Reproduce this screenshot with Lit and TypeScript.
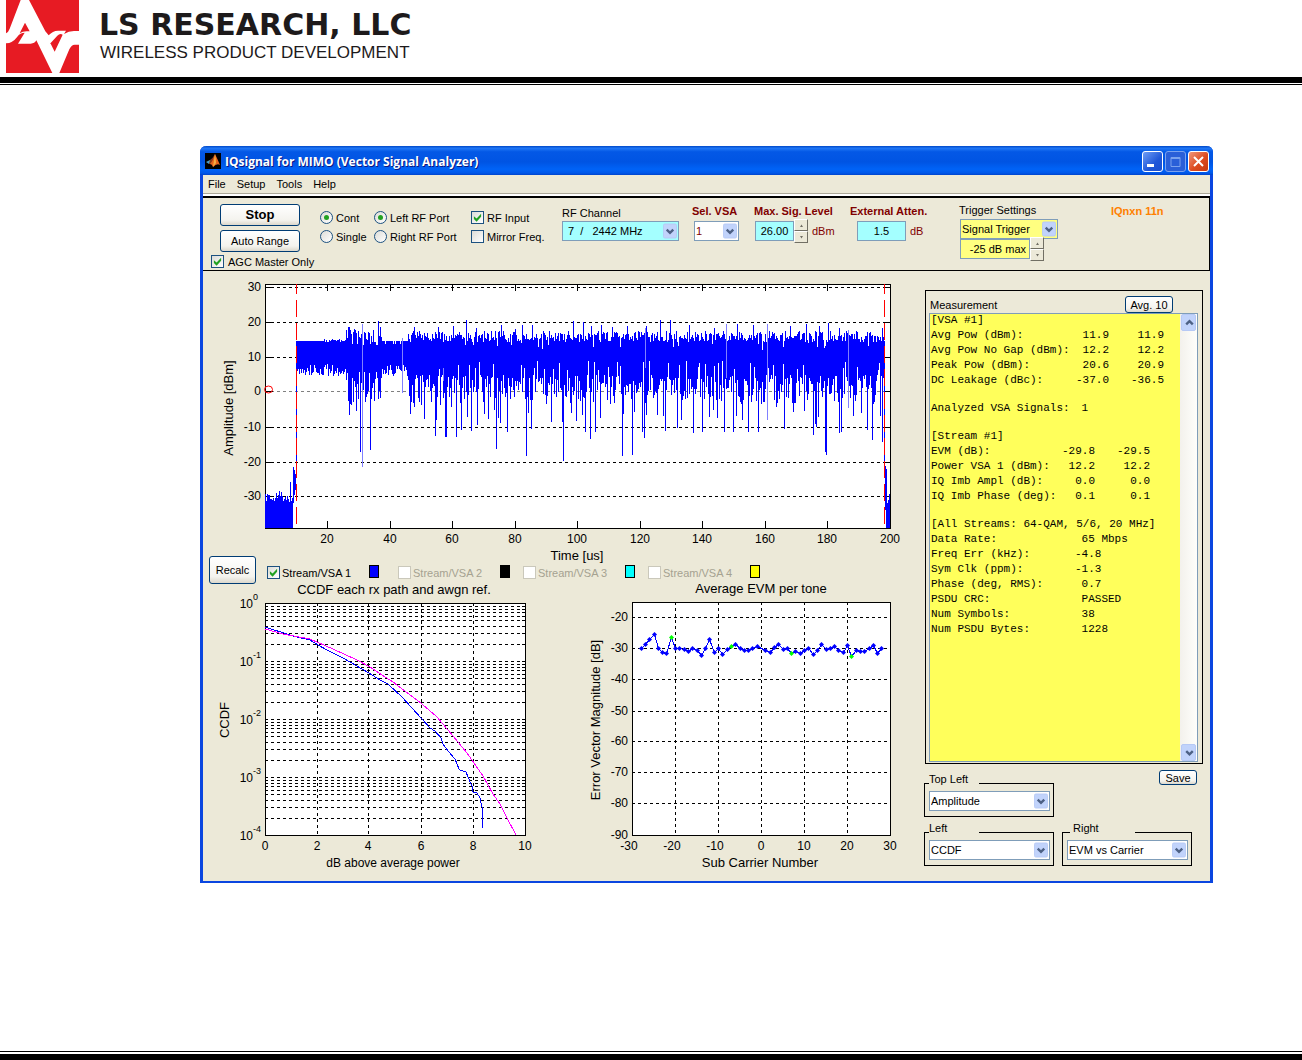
import { LitElement, html, svg, css } from "lit";
import { customElement, property } from "lit/decorators.js";

const SANS = css`"Liberation Sans", Arial, sans-serif`;

/* Styles shared by every XP-like control */
const controls = css`
  *, *::before, *::after { box-sizing: border-box; }
  button, input, select, label, legend { font-family: ${SANS}; font-size: 11px; color: #000; margin: 0; }
  .btn {
    border: 1px solid #003c74; border-radius: 3px; padding: 0 4px;
    background: linear-gradient(#ffffff, #f4f3ee 75%, #dcd8cc);
    line-height: 14px; white-space: nowrap;
  }
  .choice { display: flex; align-items: center; gap: 3px; height: 13px; white-space: nowrap; }
  .choice.off label { color: #a5a291; }
  input[type="checkbox"], input[type="radio"] {
    appearance: none; width: 13px; height: 13px; flex: none;
    border: 1px solid #1c5180; display: grid; place-items: center;
    background: linear-gradient(135deg, #dcdcd7, #ffffff);
  }
  input[type="radio"] { border-radius: 50%; }
  input[type="radio"]:checked::before {
    content: ""; width: 5px; height: 5px; border-radius: 50%; background: #21a121;
  }
  input[type="checkbox"]:checked::before {
    content: ""; width: 9px; height: 9px; background: #21a121;
    clip-path: polygon(10% 35%, 40% 62%, 90% 8%, 90% 42%, 40% 96%, 10% 68%);
  }
  input[type="checkbox"]:disabled { border-color: #cac8bb; background: #fff; }
  .combo { display: grid; height: 20px; }
  .combo > * { grid-area: 1 / 1; }
  .combo select {
    appearance: none; width: 100%; height: 20px; padding: 0 18px 0 1px;
    border: 1px solid #7f9db9; border-radius: 0; background: #fff; line-height: 18px;
  }
  .combo svg { justify-self: end; align-self: center; margin-right: 2px; pointer-events: none; }
  .cyan select, input.cyan { background: #a4ffff; }
  .yellow select, input.yellow { background: #ffff80; }
`;

const chevron = (up = false) => svg`
  <path d=${up ? "M4 10 L7.500 6.500 L11 10" : "M4 6.500 L7.500 10 L11 6.500"} fill="none" stroke="#4d6185" stroke-width="2.500"></path>`;

const comboArrow = html`
  <svg width="14" height="16" viewBox="0 0 15 16" aria-hidden="true">
    <rect x="0.500" y="0.500" width="14" height="15" rx="1.500" fill="#c1d3fb" stroke="#b6c9f5"></rect>
    ${chevron()}
  </svg>`;

/* Drop-down whose accessible name comes from its label property */
@customElement("xp-combo")
class XpCombo extends LitElement {
  @property() label = "";
  @property() value = "";
  @property() tone = "";
  static styles = [controls, css`
    :host { display: block; }
    .dark select { color: #800000; }
    .indent select { padding-left: 5px; }
  `];
  render() {
    return html`<div class="combo ${this.tone}">
      <select aria-label=${this.label}><option>${this.value}</option></select>${comboArrow}
    </div>`;
  }
}

@customElement("xp-spin")
class XpSpin extends LitElement {
  @property() label = "";
  static styles = css`
    :host { display: block; }
    .spin { display: flex; flex-direction: column; width: 14px; }
    button {
      box-sizing: border-box; width: 14px; height: 12px; padding: 0; display: grid; place-items: center;
      background: #ece9d8; border: 1px solid; border-color: #fff #716f64 #716f64 #fff; border-radius: 0;
    }
  `;
  render() {
    return html`<div class="spin">
      <button aria-label="${this.label} up"><svg width="5" height="3"><path d="M1 3 L2.500 0.500 L4 3Z" fill="#716f64"></path></svg></button>
      <button aria-label="${this.label} down"><svg width="5" height="3"><path d="M1 0 L2.500 2.500 L4 0Z" fill="#716f64"></path></svg></button>
    </div>`;
  }
}

const chartStyles = css`
  :host { display: block; }
  svg { display: block; width: 100%; height: auto; overflow: visible; font-family: ${SANS}; }
  .plot { fill: #fff; stroke: #000; }
  .crisp { shape-rendering: crispEdges; }
  .grid { stroke: #000; stroke-dasharray: 3 3; fill: none; }
  .soft { stroke: #808080; }
  .tick { stroke: #000; fill: none; }
  .num { font-size: 12px; }
  .name { font-size: 13px; }
  .sup { font-size: 9px; }
  .mid { text-anchor: middle; }
  .end { text-anchor: end; }
  .blue { stroke: #0000ff; fill: none; }
  .pale { stroke: #8080ff; fill: none; }
  .magenta { stroke: #ff00ff; fill: none; }
  .red { stroke: #ff0000; fill: none; }
  .marker { stroke-dasharray: 17 6; stroke-dashoffset: 7; }
  .dot { fill: #0000ff; }
  .pilot { fill: #00ff00; }
`;

/* Small repeatable generator so that the trace is the same on every draw */
function makeRandom(seed: number) {
  let s = seed;
  return () => {
    s = (s * 1664525 + 1013904223) % 4294967296;
    return s / 4294967296;
  };
}

const DIPS: Record<number, number> = {
  349: 415, 351: 405, 356: 411, 360: 452, 370: 450, 374: 401, 410: 414, 414: 407, 421: 405, 424: 419, 431: 402,
  435: 436, 436: 420, 440: 405, 445: 437, 446: 437, 451: 407, 456: 437, 461: 430, 467: 417, 471: 431, 477: 425,
  484: 414, 488: 419, 494: 410, 496: 449, 498: 418, 500: 423, 507: 432, 526: 456, 528: 413, 531: 429, 546: 404,
  551: 422, 562: 422, 563: 461, 571: 413, 576: 421, 582: 415, 585: 432, 590: 439, 595: 432, 600: 418, 622: 456,
  623: 414, 632: 455, 634: 412, 642: 432, 644: 438, 646: 415, 657: 415, 663: 416, 665: 431, 677: 428, 681: 420,
  693: 433, 702: 432, 709: 417, 713: 410, 717: 418, 724: 432, 733: 432, 736: 416, 742: 420, 748: 432, 758: 432,
  776: 407, 784: 429, 793: 412, 804: 411, 813: 435, 815: 424, 816: 427, 818: 417, 825: 452, 826: 455, 839: 433,
  841: 432, 853: 416, 861: 413, 867: 430, 872: 440, 880: 416, 882: 442,
};
const PEAKS: Record<number, number> = {
  348: 327, 349: 327, 354: 329, 378: 321, 380: 327, 414: 327, 438: 327, 453: 326, 466: 320, 476: 328, 501: 325,
  515: 329, 522: 325, 532: 325, 573: 321, 583: 322, 591: 326, 601: 325, 612: 327, 627: 326, 646: 326, 660: 320,
  670: 320, 689: 325, 714: 328, 737: 324, 753: 325, 790: 326, 806: 324, 819: 326, 828: 323, 839: 328, 882: 328,
};

function burstPath() {
  const rnd = makeRandom(7);
  let d = "";
  const bar = (x: number, a: number, b: number) => { d += `M${x + 0.5} ${Math.round(a)}V${Math.round(b)}`; };
  for (let x = 265; x < 293; x++) bar(x, rnd() < 0.25 ? 487 + rnd() * 8 : 495 + rnd() * 7, 528);
  bar(290, 482, 528);
  bar(293, 467, 503);
  bar(294, 470, 495);
  bar(295, 474, 490);
  for (let x = 296; x < 884; x++) {
    let top: number, low: number;
    if (x < 346) {
      top = x < 322 ? 341 : 339 + rnd() * 3;
      low = rnd() < 0.6 ? 371 + rnd() * 5 : 364 + rnd() * 6;
    } else if (x < 382) {
      top = 330 + rnd() * 15;
      low = 372 + Math.pow(rnd(), 1.2) * 32;
    } else if (x < 408) {
      top = 341 + (rnd() < 0.15 ? 3 : 0);
      low = 364 + rnd() * 14;
    } else {
      top = 331 + rnd() * 11 + (rnd() < 0.06 ? 8 : 0);
      low = rnd() < 0.1 ? 360 + rnd() * 10 : 375 + Math.pow(rnd(), 1.2) * 29;
    }
    bar(x, PEAKS[x] ?? top, DIPS[x] ?? low);
  }
  bar(884, 341, 470);
  bar(885, 466, 510);
  bar(886, 469, 528);
  bar(887, 503, 528);
  bar(888, 500, 528);
  bar(889, 494, 528);
  return d;
}

@customElement("amplitude-chart")
class AmplitudeChart extends LitElement {
  static styles = chartStyles;
  render() {
    const rows = [[30, 287], [20, 322], [10, 357], [0, 391], [-10, 427], [-20, 462], [-30, 496]];
    const cols = [[20, 327], [40, 390], [60, 452], [80, 515], [100, 577], [120, 640], [140, 702], [160, 765], [180, 827], [200, 890]];
    return html`<svg viewBox="203 271 717 285" role="img" aria-label="Amplitude over time">
      <g class="crisp">
        <rect class="plot" x="265.500" y="284.500" width="625" height="244"></rect>
        ${rows.map(([v, y]) => svg`
          <path class="grid ${v === 0 ? "soft" : ""}" d="M265 ${y + 0.5}H890"></path>
          <path class="tick" d="M265 ${y + 0.5}h8M890 ${y + 0.5}h-6"></path>`)}
        ${cols.map(([, x]) => svg`<path class="tick" d="M${x + 0.5} 285v6M${x + 0.5} 528v-7"></path>`)}
        <path class="blue" d="M296.500 341V470"></path>
        <path class="blue" d=${burstPath()}></path>
        <path class="pale" d="M362.500 324V467M402.500 338V393M443.500 368V381M767.500 324V420M726.500 324V378M645.500 328V368M848.500 330V408"></path>
        <path class="red marker" d="M296.500 284V528M884.500 284V528"></path>
      </g>
      <ellipse class="red" cx="268.500" cy="389.500" rx="4" ry="3.500"></ellipse>
      ${rows.map(([v, y]) => svg`<text class="num end" x="261" y=${y + 4}>${v}</text>`)}
      ${cols.map(([v, x]) => svg`<text class="num mid" x=${x} y="543">${v}</text>`)}
      <text class="name mid" x="577" y="560">Time [us]</text>
      <text class="name mid" transform="translate(233 408) rotate(-90)">Amplitude [dBm]</text>
    </svg>`;
  }
}

@customElement("ccdf-chart")
class CcdfChart extends LitElement {
  static styles = chartStyles;
  render() {
    const cols = [[0, 265], [2, 317], [4, 368], [6, 421], [8, 473], [10, 525]];
    const rows: number[] = [];
    for (let decade = 0; decade < 4; decade++)
      for (let k = 1; k < 10; k++) rows.push(Math.round(661 + decade * 58 - Math.log10(k) * 58));
    return html`<svg viewBox="203 584 357 297" role="img" aria-label="CCDF">
      <g class="crisp">
        <rect class="plot" x="265.500" y="603.500" width="260" height="232"></rect>
        ${rows.map((y) => svg`<path class="grid" d="M265 ${y + 0.5}H525"></path>
          <path class="tick" d="M265 ${y + 0.5}h3M525 ${y + 0.5}h-3"></path>`)}
        ${cols.slice(1, 5).map(([, x]) => svg`<path class="grid" d="M${x + 0.5} 603V835"></path>`)}
        <path class="blue" d="M265 627L293 636L310 640L318 645L327 650L343 658L369 673L380 680L388 684L402 697L412 708L422 719L430 728L435 731L441 738L443 744L448 751L455 759L459 769L460 770L466 772L471 784L472 786L473 792L477 793L480 798L482 807L483 828"></path>
        <path class="magenta" d="M265 629L283 634L310 639L333 649L357 660L370 667L382 675L393 682L405 691L422 704L437 717L453 736L467 753L483 776L493 794L500 804L507 818L516 835"></path>
      </g>
      ${[0, -1, -2, -3, -4].map((e, i) => svg`
        <text class="num end" x="253" y=${608 + i * 58}>10</text>
        <text class="sup" x="253" y=${600 + i * 58}>${e}</text>`)}
      ${cols.map(([v, x]) => svg`<text class="num mid" x=${x} y="850">${v}</text>`)}
      <text class="name mid" x="394" y="594">CCDF each rx path and awgn ref.</text>
      <text class="num mid" x="393" y="867">dB above average power</text>
      <text class="name mid" transform="translate(229 720) rotate(-90)">CCDF</text>
    </svg>`;
  }
}

/* Marker heights by carrier number, three units to a pixel */
const EVM: [number, number][] = [
  [-28, 295], [-27, 281], [-26, 268], [-25, 251], [-24, 295], [-23, 307], [-22, 310], [-21, 262], [-20, 295],
  [-19, 293], [-18, 298], [-17, 304], [-16, 293], [-15, 301], [-14, 316], [-13, 295], [-12, 268], [-11, 307],
  [-10, 293], [-9, 313], [-8, 298], [-7, 289], [-6, 281], [-5, 295], [-4, 301], [-3, 301], [-2, 293], [-1, 287],
  [1, 301], [2, 307], [3, 290], [4, 281], [5, 298], [6, 293], [7, 310], [8, 304], [9, 310], [10, 301], [11, 295],
  [12, 313], [13, 301], [14, 283], [15, 298], [16, 295], [17, 287], [18, 301], [19, 307], [20, 284], [21, 319],
  [22, 301], [23, 304], [24, 304], [25, 295], [26, 284], [27, 310], [28, 293],
];

@customElement("evm-chart")
class EvmChart extends LitElement {
  static styles = chartStyles;
  render() {
    const cols = [[-30, 632], [-20, 675], [-10, 718], [0, 761], [10, 804], [20, 847], [30, 890]];
    const rows = [[-20, 617], [-30, 648], [-40, 679], [-50, 711], [-60, 741], [-70, 772], [-80, 803], [-90, 835]];
    const pts = EVM.map(([n, z]) => [n, Math.round(761 + n * 4.3), Math.round(550 + z / 3)]);
    return html`<svg viewBox="560 584 360 297" role="img" aria-label="Average EVM per tone">
      <g class="crisp">
        <rect class="plot" x="632.500" y="602.500" width="258" height="233"></rect>
        ${rows.slice(0, 7).map(([, y]) => svg`<path class="grid" d="M632 ${y + 0.5}H890"></path>`)}
        ${cols.slice(1, 6).map(([, x]) => svg`<path class="grid" d="M${x + 0.5} 602V835"></path>`)}
        <path class="blue" d=${"M" + pts.map(([, x, y]) => `${x + 0.5} ${y + 0.5}`).join("L")}></path>
      </g>
      ${pts.map(([n, x, y]) => svg`<path class=${Math.abs(n) === 7 || Math.abs(n) === 21 ? "pilot" : "dot"}
        d="M${x + 0.5} ${y - 2}l2.500 2.500l-2.500 2.500l-2.500 -2.500Z"></path>`)}
      ${rows.map(([v, y]) => svg`<text class="num end" x="628" y=${y + 4}>${v}</text>`)}
      ${cols.map(([v, x]) => svg`<text class="num mid" x=${x - (v < 0 ? 3 : 0)} y="850">${v}</text>`)}
      <text class="name mid" x="761" y="593">Average EVM per tone</text>
      <text class="name mid" x="760" y="867">Sub Carrier Number</text>
      <text class="name mid" transform="translate(600 720) rotate(-90)">Error Vector Magnitude [dB]</text>
    </svg>`;
  }
}

type Section = { kind: string; title: string; rows: string[][] };
const SECTIONS: Section[] = [
  { kind: "vsa", title: "[VSA #1]", rows: [
    ["Avg Pow (dBm):", "11.9", "11.9"], ["Avg Pow No Gap (dBm):", "12.2", "12.2"],
    ["Peak Pow (dBm):", "20.6", "20.9"], ["DC Leakage (dBc):", "-37.0", "-36.5"]] },
  { kind: "all", title: "", rows: [["Analyzed VSA Signals:", " 1"]] },
  { kind: "stream", title: "[Stream #1]", rows: [
    ["EVM (dB):", "-29.8", "-29.5"], ["Power VSA 1 (dBm):", "12.2", "12.2"],
    ["IQ Imb Ampl (dB):", "0.0", "0.0"], ["IQ Imb Phase (deg):", "0.1", "0.1"]] },
  { kind: "all", title: "[All Streams: 64-QAM, 5/6, 20 MHz]", rows: [
    ["Data Rate:", " 65 Mbps"], ["Freq Err (kHz):", "-4.8"], ["Sym Clk (ppm):", "-1.3"], ["Phase (deg, RMS):", " 0.7"],
    ["PSDU CRC:", " PASSED"], ["Num Symbols:", " 38"], ["Num PSDU Bytes:", " 1228"]] },
];

@customElement("measurement-panel")
class MeasurementPanel extends LitElement {
  static styles = [controls, css`
    :host { display: flex; flex-direction: column; border: 1px solid #000; }
    .head { display: flex; justify-content: space-between; align-items: flex-end; height: 22px; padding: 0 29px 0 4px; font: 11px/16px ${SANS}; }
    .head .btn { width: 48px; height: 17px; }
    .box { flex: 1; display: flex; margin: 0 4px 1px 3px; border: 1px solid #7f9db9; background: #ffff5b; }
    .list { flex: 1; min-width: 0; display: flex; flex-direction: column; gap: 13px; padding: 0 1px; }
    table { border-collapse: collapse; table-layout: fixed; width: 240px; font: 11px/15px "Liberation Mono", "Courier New", monospace; }
    th, td { padding: 0; font-weight: normal; text-align: left; white-space: pre; height: 15px; line-height: 13px; vertical-align: top; }
    .vsa .k { width: 144px; } .vsa .v { width: 34px; }
    .stream .k { width: 130px; } .stream .v { width: 34px; }
    .vsa td, .stream td { text-align: right; }
    .w { width: 55px; }
    .all .k { width: 144px; }
    .bar { width: 17px; flex: none; display: flex; flex-direction: column; justify-content: space-between; background: linear-gradient(90deg, #f3f1ec, #fefefb); padding: 0 1px; }
    .bar button { width: 15px; height: 17px; padding: 0; border: 1px solid #b6c9f5; border-radius: 2px; background: #c1d3fb; display: grid; place-items: center; }
  `];
  render() {
    return html`
      <div class="head"><span>Measurement</span><button class="btn">Avg. 10</button></div>
      <div class="box">
        <div class="list">
          ${SECTIONS.map((s) => html`<table class=${s.kind}>
            <colgroup><col class="k"><col class=${s.kind === "all" ? "" : "v"}>${s.kind === "all" ? "" : html`<col class="w"><col>`}</colgroup>
            ${s.title ? html`<tr><th colspan=${s.kind === "all" ? 2 : 4}>${s.title}</th></tr>` : ""}
            ${s.rows.map((r) => html`<tr><th>${r[0]}</th>${r.slice(1).map((c) => html`<td>${c}</td>`)}</tr>`)}
          </table>`)}
        </div>
        <div class="bar">
          <button aria-label="Scroll up"><svg width="15" height="15" viewBox="0 0 15 16">${chevron(true)}</svg></button>
          <button aria-label="Scroll down"><svg width="15" height="15" viewBox="0 0 15 16">${chevron()}</svg></button>
        </div>
      </div>`;
  }
}

@customElement("control-strip")
class ControlStrip extends LitElement {
  static styles = [controls, css`
    :host { display: block; }
    .strip {
      display: grid; grid-template-columns: 117px 54px 97px 91px 130px 62px 96px 109px 152px 1fr;
      border: solid #000; border-width: 2px 1px 1px 0;
    }
    .run { display: flex; flex-direction: column; padding: 6px 0 2px 8px; }
    .run .btn { width: 80px; height: 22px; margin-left: 9px; }
    .run .stop { font-size: 13px; font-weight: bold; margin-bottom: 4px; }
    .run .choice { gap: 4px; margin-top: 3px; }
    .pair { display: flex; flex-direction: column; gap: 6px; padding-top: 13px; }
    .field { display: flex; flex-direction: column; align-items: flex-start; gap: 3px; padding-top: 6px; white-space: nowrap; }
    .field .cap { line-height: 14px; }
    .low { padding-top: 8px; gap: 1px; }
    .cap.strong { font-weight: bold; color: #800000; }
    .channel { width: 117px; }
    .vsa { width: 45px; margin-left: 2px; }
    .line { display: flex; align-items: center; height: 20px; }
    .line input { height: 20px; border: 1px solid #7f9db9; padding: 0; text-align: center; }
    .level { width: 39px; margin-left: 1px; }
    .atten { width: 49px; margin-left: 7px; }
    .unit { color: #800000; margin-left: 4px; font: 11px/14px ${SANS}; }
    .trigger { padding-top: 5px; gap: 2px; }
    .settings { display: flex; flex-direction: column; margin-left: 1px; }
    .settings xp-combo { width: 98px; }
    .settings input { width: 70px; text-align: right; padding-right: 3px; }
    .tag { font: bold 11px/14px ${SANS}; color: #ff8000; padding-top: 6px; white-space: nowrap; }
  `];
  choice(id: string, type: string, text: string, checked: boolean, name = "") {
    return html`<div class="choice"><input id=${id} type=${type} name=${name} ?checked=${checked}><label for=${id}>${text}</label></div>`;
  }
  render() {
    return html`<div class="strip">
      <div class="run">
        <button class="btn stop">Stop</button>
        <button class="btn">Auto Range</button>
        ${this.choice("agc", "checkbox", "AGC Master Only", true)}
      </div>
      <div class="pair">${this.choice("cont", "radio", "Cont", true, "mode")}${this.choice("single", "radio", "Single", false, "mode")}</div>
      <div class="pair">${this.choice("left", "radio", "Left RF Port", true, "port")}${this.choice("right", "radio", "Right RF Port", false, "port")}</div>
      <div class="pair">${this.choice("rf", "checkbox", "RF Input", true)}${this.choice("mirror", "checkbox", "Mirror Freq.", false)}</div>
      <div class="field low"><span class="cap">RF Channel</span>
        <xp-combo class="channel" label="RF Channel" tone="cyan indent" value=${"7\u00a0 /\u00a0\u00a0 2442 MHz"}></xp-combo></div>
      <div class="field"><span class="cap strong">Sel. VSA</span>
        <xp-combo class="vsa" label="Sel. VSA" tone="dark" value="1"></xp-combo></div>
      <div class="field"><label class="cap strong" for="level">Max. Sig. Level</label>
        <div class="line"><input id="level" class="cyan level" type="text" value="26.00"><xp-spin label="Level"></xp-spin><span class="unit">dBm</span></div></div>
      <div class="field"><label class="cap strong" for="atten">External Atten.</label>
        <div class="line"><input id="atten" class="cyan atten" type="text" value="1.5"><span class="unit">dB</span></div></div>
      <div class="field trigger"><label class="cap" for="trig">Trigger Settings</label>
        <div class="settings">
          <xp-combo label="Trigger" tone="yellow" value="Signal Trigger"></xp-combo>
          <div class="line"><input id="trig" class="yellow" type="text" value="-25 dB max"><xp-spin label="Trigger level"></xp-spin></div>
        </div></div>
      <div class="tag">IQnxn 11n</div>
    </div>`;
  }
}

@customElement("app-root")
class AppRoot extends LitElement {
  static styles = [controls, css`
    :host { display: block; font: 11px/14px ${SANS}; color: #000; background: #fff; }
    .page { min-height: 100vh; display: flex; flex-direction: column; }
    .brand { display: flex; gap: 20px; padding: 0 6px 4px; }
    .brand svg { display: block; flex: none; }
    .words { padding-top: 7px; white-space: nowrap; color: #1d1a1b; }
    .company { font: bold 30px/36px "DejaVu Sans", Verdana, sans-serif; }
    .motto { font: 17px/20px ${SANS}; padding-left: 1px; }
    .thick { height: 6px; background: #000; }
    .thin { height: 1px; background: #000; margin-top: 1px; }
    .foot { margin-top: auto; }
    .foot .thin { margin: 0 0 2px; }
    .window {
      margin: 61px 89px 24px 200px; background: #ece9d8;
      border: solid #0a46e0; border-width: 0 3px 2px; border-radius: 6px 6px 0 0;
    }
    .title {
      display: flex; align-items: center; height: 29px; margin: 0 -3px; padding: 0 4px 0 5px;
      border-radius: 6px 6px 0 0; color: #fff; text-shadow: 1px 1px #0a1883;
      font: bold 12px/16px "Open Sans", "Trebuchet MS", sans-serif;
      background: linear-gradient(#0048c8, #1f76f5 8%, #0458e6 20%, #0054e3 55%, #0063f7 80%, #0058ea 93%, #0044cc);
    }
    .title h1 { font: inherit; margin: 0 auto 0 4px; padding-top: 2px; white-space: nowrap; }
    .title svg { display: block; }
    .caps { display: flex; gap: 2px; padding-top: 1px; }
    .caps button { width: 21px; height: 21px; padding: 0; border: 1px solid #fff; border-radius: 3px; background: linear-gradient(135deg, #6f9df5, #2057d8 60%, #1a4fd0); }
    .caps .dim { border-color: #7ba2ee; background: #2a5fd8; }
    .caps .close { background: linear-gradient(135deg, #f0977c, #dd4b20 55%, #c63a10); }
    .menu { display: flex; gap: 11px; padding: 2px 5px 0; height: 19px; border-bottom: 1px solid #aca899; }
    .menu button { border: 0; padding: 0; background: none; height: 14px; line-height: 14px; }
    .gap { height: 2px; background: #fff; }
    .body { display: grid; grid-template-columns: minmax(0, 1fr) 290px; }
    .streams { display: flex; height: 28px; padding-left: 6px; }
    .streams .btn { width: 47px; height: 28px; margin-right: 11px; }
    .stream { display: flex; align-items: flex-start; padding-top: 9px; width: 125px; }
    .stream:first-of-type { width: 131px; }
    .stream .choice { width: 102px; gap: 2px; margin-top: 1px; }
    .stream .swatch { width: 10px; height: 13px; border: 1px solid #000; }
    .c0 { background: #0000ff; } .c1 { background: #000; } .c2 { background: #00ffff; } .c3 { background: #ffff00; }
    .lower { display: grid; grid-template-columns: 357fr 360fr; }
    .side { display: flex; flex-direction: column; padding: 19px 7px 15px 4px; }
    .side measurement-panel { flex: 1; margin-left: 1px; }
    .row { display: flex; align-items: flex-end; justify-content: space-between; margin-top: 6px; padding-right: 6px; min-height: 47px; }
    .row .btn { width: 38px; height: 15px; align-self: flex-start; line-height: 12px; }
    .row.two { justify-content: flex-start; gap: 8px; margin-top: 7px; padding: 0; min-height: 0; }
    fieldset { width: 130px; margin: 0; padding: 0 3px 5px 4px; border: 1px solid #000; min-width: 0; }
    legend { width: 50px; height: 16px; line-height: 8px; padding: 0 0 8px; white-space: nowrap; }
    .wide legend { margin-left: 3px; width: 65px; padding-left: 3px; }
  `];

  streams() {
    return html`<div class="streams"><button class="btn">Recalc</button>
      ${[0, 1, 2, 3].map((i) => html`<div class="stream">
        <div class="choice ${i ? "off" : ""}"><input id="s${i}" type="checkbox" ?checked=${i === 0} ?disabled=${i > 0}><label for="s${i}">Stream/VSA ${i + 1}</label></div>
        <span class="swatch c${i}"></span></div>`)}
    </div>`;
  }

  view(name: string, value: string, cls = "") {
    return html`<fieldset class=${cls}><legend>${name}</legend><xp-combo label=${name} value=${value}></xp-combo></fieldset>`;
  }

  render() {
    return html`<div class="page">
      <header>
        <div class="brand">
          <svg width="73" height="73" viewBox="18 0 219 219" role="img" aria-label="LS Research logo">
            <rect x="18" y="0" width="219" height="219" fill="#e71b23"></rect>
            <path fill="#fff" d="M62 0 L87 0 L136 94 L146 106 Q158 92 174 92 L198 92 L192 102 Q206 93 222 93 L237 93 L237 134 L224 134 Q214 134 208 148 L178 219 L157 219 L109 121 Q104 131 92 131 L54 131 L74 98 Q60 98 52 110 Q38 129 18 130 L18 100 Q25 97 29 86 Z"></path>
            <path fill="#e71b23" d="M75 68 L89 94 L80 94 Q68 94 59 100 Z M138 131 L150 131 L172 107 Q180 99 188 104 L164 155 L152 131 Z"></path>
          </svg>
          <div class="words"><div class="company">LS RESEARCH, LLC</div><div class="motto">WIRELESS PRODUCT DEVELOPMENT</div></div>
        </div>
        <div class="thick"></div><div class="thin"></div>
      </header>
      <main class="window">
        <div class="title">
          <svg width="16" height="16" viewBox="0 0 16 16" aria-hidden="true">
            <rect width="16" height="16" fill="#000"></rect>
            <path d="M1 9 L5 7 L7 9 L4 11Z" fill="#4aa0c8"></path>
            <path d="M5 7 Q8 5 10 1 L8 11 L4 11Z" fill="#8a3a1a"></path>
            <path d="M10 1 Q12 5 15 12 Q12 10 8 14 Q7 11 5 11 Q8 8 10 1Z" fill="#e8641c"></path>
            <path d="M10 1 Q11 6 11 10 L8 14 Q9 7 10 1Z" fill="#f8b040"></path>
          </svg>
          <h1>IQsignal for MIMO (Vector Signal Analyzer)</h1>
          <div class="caps">
            <button aria-label="Minimize"><svg width="19" height="19"><rect x="4" y="12" width="7" height="3" fill="#fff"></rect></svg></button>
            <button class="dim" aria-label="Maximize"><svg width="19" height="19"><path d="M5 5.500h9v9h-9zM5 6.500h9" fill="none" stroke="#7ba2ee"></path></svg></button>
            <button class="close" aria-label="Close"><svg width="19" height="19"><path d="M5 5L14 14M14 5L5 14" stroke="#fff" stroke-width="2"></path></svg></button>
          </div>
        </div>
        <nav class="menu"><button>File</button><button>Setup</button><button>Tools</button><button>Help</button></nav>
        <div class="gap"></div>
        <control-strip></control-strip>
        <div class="body">
          <div class="charts">
            <amplitude-chart></amplitude-chart>
            ${this.streams()}
            <div class="lower"><ccdf-chart></ccdf-chart><evm-chart></evm-chart></div>
          </div>
          <div class="side">
            <measurement-panel></measurement-panel>
            <div class="row">${this.view("Top Left", "Amplitude")}<button class="btn">Save</button></div>
            <div class="row two">${this.view("Left", "CCDF")}${this.view("Right", "EVM vs Carrier", "wide")}</div>
          </div>
        </div>
      </main>
      <footer class="foot"><div class="thin"></div><div class="thick"></div></footer>
    </div>`;
  }
}
